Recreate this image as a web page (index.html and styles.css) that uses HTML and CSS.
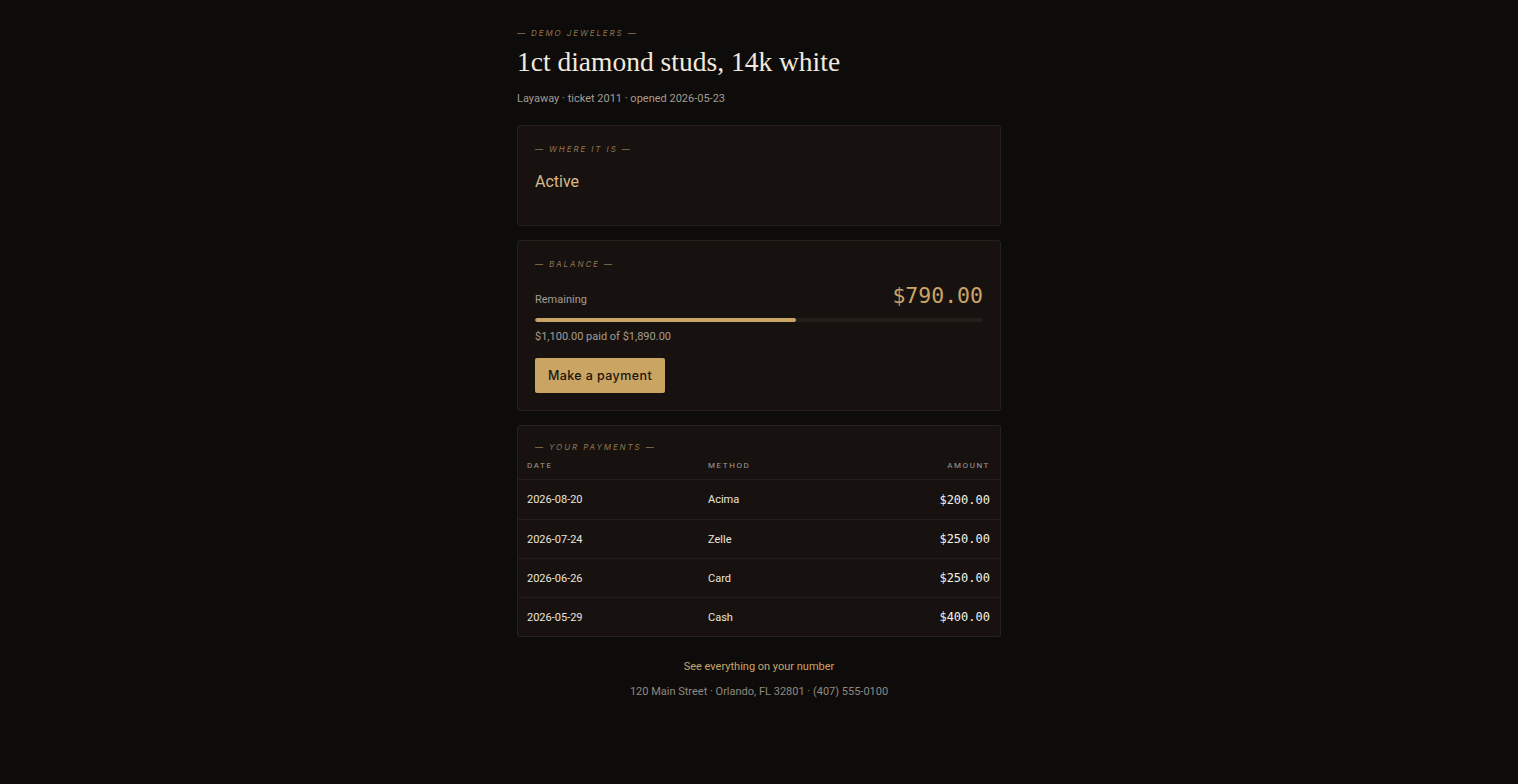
FILE: index.html
```html
<!DOCTYPE html>
<html lang="en">
<head>
<meta charset="utf-8">
<title>1ct diamond studs, 14k white</title>
<link rel="stylesheet" href="styles.css">
</head>
<body>
<main class="page">
  <div class="eyebrow">— Demo Jewelers —</div>
  <h1 class="title">1ct diamond studs, 14k white</h1>
  <div class="meta">Layaway · ticket 2011 · opened 2026-05-23</div>

  <section class="card card-status">
    <div class="label">— Where it is —</div>
    <div class="status">Active</div>
  </section>

  <section class="card card-balance">
    <div class="label">— Balance —</div>
    <div class="balance-row">
      <span class="remaining">Remaining</span>
      <span class="amount-big">$790.00</span>
    </div>
    <div class="track"><div class="fill" style="width:58.2%"></div></div>
    <div class="paid">$1,100.00 paid of $1,890.00</div>
    <button class="pay">Make a payment</button>
  </section>

  <section class="card card-payments">
    <div class="label label-pay">— Your payments —</div>
    <div class="row head">
      <span>Date</span><span>Method</span><span class="r">Amount</span>
    </div>
    <div class="row">
      <span>2026-08-20</span><span>Acima</span><span class="r mono">$200.00</span>
    </div>
    <div class="row">
      <span>2026-07-24</span><span>Zelle</span><span class="r mono">$250.00</span>
    </div>
    <div class="row">
      <span>2026-06-26</span><span>Card</span><span class="r mono">$250.00</span>
    </div>
    <div class="row">
      <span>2026-05-29</span><span>Cash</span><span class="r mono">$400.00</span>
    </div>
  </section>

  <footer class="foot">
    <a class="foot-link" href="#">See everything on your number</a>
    <div class="addr">120 Main Street · Orlando, FL 32801 · (407) 555-0100</div>
  </footer>
</main>
</body>
</html>
```

FILE: styles.css
```css
* { box-sizing: border-box; }
html, body { margin: 0; padding: 0; }
body {
  background: #0e0c0a;
  font-family: Roboto, Inter, "Noto Sans", "Liberation Sans", sans-serif;
  color: #e8e2d8;
  min-height: 784px;
}
.page {
  width: 484px;
  margin: 0 auto;
  padding-top: 27px;
  display: flex;
  flex-direction: column;
}
.eyebrow, .label {
  font-family: Inter, Roboto, sans-serif;
  font-size: 8px;
  line-height: 12px;
  font-style: italic;
  text-transform: uppercase;
  letter-spacing: 1.9px;
  color: #8f7552;
}
.title {
  margin: 7px 0 0;
  font-family: "Liberation Serif", "DejaVu Serif", serif;
  font-weight: 400;
  font-size: 27.5px;
  line-height: 32px;
  color: #f1e9dd;
}
.meta {
  margin-top: 14px;
  font-size: 11px;
  line-height: 14px;
  color: #a29b92;
}
.card {
  background: #17120f;
  border: 1px solid #27211c;
  border-radius: 3px;
  margin-top: 14px;
}
.card-status {
  margin-top: 19px;
  padding: 17px 17px 33px;
}
.status {
  margin-top: 17px;
  font-size: 16px;
  line-height: 20px;
  color: #d8b98a;
}
.card-balance {
  padding: 17px 17px 17px;
  display: flex;
  flex-direction: column;
}
.balance-row {
  margin-top: 13px;
  display: flex;
  justify-content: space-between;
  align-items: center;
}
.remaining {
  font-size: 11px;
  line-height: 14px;
  margin-top: 8px;
  color: #a39d95;
}
.amount-big {
  font-family: "DejaVu Sans Mono", "Liberation Mono", monospace;
  font-size: 21.5px;
  line-height: 26px;
  color: #c9a468;
}
.track {
  margin-top: 9px;
  height: 4px;
  border-radius: 2px;
  background: #231e19;
  overflow: hidden;
}
.fill {
  height: 100%;
  background: #c9a468;
  border-radius: 2px;
}
.paid {
  margin-top: 8px;
  font-size: 11px;
  line-height: 14px;
  color: #a39d95;
}
.pay {
  align-self: flex-start;
  margin-top: 14px;
  height: 35px;
  width: 130px;
  padding: 0;
  border: 0;
  border-radius: 2px;
  background: #c9a463;
  color: #1b140c;
  font-family: Inter, Roboto, sans-serif;
  font-size: 12.5px;
  font-weight: 500;
  letter-spacing: 0.4px;
}
.card-payments {
  padding-top: 15px;
}
.label-pay {
  padding-left: 17px;
}
.row {
  display: grid;
  grid-template-columns: 181px 1fr auto;
  padding: 0 10px 0 9px;
  height: 39px;
  align-items: center;
  border-top: 1px solid #231e19;
  font-size: 11px;
  color: #ebe5db;
}
.row.head {
  height: auto;
  border-top: 0;
  margin-top: 7px;
  padding-bottom: 7px;
  font-size: 8px;
  line-height: 12px;
  letter-spacing: 1.6px;
  text-transform: uppercase;
  color: #a39d95;
}
.row.head + .row { height: 40px; }
.r { text-align: right; }
.mono {
  font-family: "DejaVu Sans Mono", "Liberation Mono", monospace;
  font-size: 12px;
  font-weight: 400;
  color: #f5f0e8;
}
.foot {
  margin-top: 23px;
  display: flex;
  flex-direction: column;
  align-items: center;
}
.foot-link {
  font-size: 11px;
  line-height: 14px;
  color: #c9a468;
  text-decoration: none;
}
.addr {
  margin-top: 11px;
  font-size: 11px;
  line-height: 14px;
  color: #8f8980;
}
```
